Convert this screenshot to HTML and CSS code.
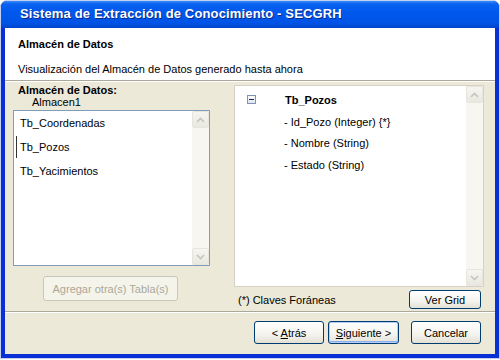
FILE: index.html
```html
<!DOCTYPE html>
<html lang="es">
<head>
    <meta charset="UTF-8">
    <title>SECGRH - Almacén de Datos</title>
    <link rel="stylesheet" href="styles.css">
</head>
<body>
    <div class="window">
        <div class="titlebar">Sistema de Extracción de Conocimiento - SECGRH</div>
        <div class="client">
            <div class="header">
                <div class="header-title">Almacén de Datos</div>
                <div class="header-desc">Visualización del Almacén de Datos generado hasta ahora</div>
            </div>
            <div class="main">
                <div class="left">
                    <div class="store-label">Almacén de Datos:</div>
                    <div class="store-name">Almacen1</div>
                    <div class="listbox">
                        <ul class="items">
                            <li>Tb_Coordenadas</li>
                            <li class="focused">Tb_Pozos</li>
                            <li>Tb_Yacimientos</li>
                        </ul>
                        <div class="scrollbar">
                            <div class="arrow"><svg width="9" height="6" viewBox="0 0 9 6"><path d="M1 5 L4.5 1.5 L8 5" fill="none" stroke="#c6c5bd" stroke-width="1.6"/></svg></div>
                            <div class="track"></div>
                            <div class="arrow"><svg width="9" height="6" viewBox="0 0 9 6"><path d="M1 1 L4.5 4.5 L8 1" fill="none" stroke="#c6c5bd" stroke-width="1.6"/></svg></div>
                        </div>
                    </div>
                    <button class="btn btn-add" disabled>Agregar otra(s) Tabla(s)</button>
                </div>
                <div class="right">
                    <div class="treebox">
                        <div class="tree">
                            <div class="tree-root">
                                <span class="toggle"></span>
                                <span class="root-name">Tb_Pozos</span>
                            </div>
                            <div class="tree-item">- Id_Pozo (Integer) {*}</div>
                            <div class="tree-item">- Nombre (String)</div>
                            <div class="tree-item">- Estado (String)</div>
                        </div>
                        <div class="scrollbar">
                            <div class="arrow"><svg width="9" height="6" viewBox="0 0 9 6"><path d="M1 5 L4.5 1.5 L8 5" fill="none" stroke="#c6c5bd" stroke-width="1.6"/></svg></div>
                            <div class="track"></div>
                            <div class="arrow"><svg width="9" height="6" viewBox="0 0 9 6"><path d="M1 1 L4.5 4.5 L8 1" fill="none" stroke="#c6c5bd" stroke-width="1.6"/></svg></div>
                        </div>
                    </div>
                    <div class="right-foot">
                        <span class="note">(*) Claves Foráneas</span>
                        <button class="btn btn-grid">Ver Grid</button>
                    </div>
                </div>
            </div>
            <div class="footer">
                <button class="btn btn-nav">&lt; <u>A</u>trás</button>
                <button class="btn btn-nav btn-default"><u>S</u>iguiente &gt;</button>
                <button class="btn btn-nav btn-cancel">Cancelar</button>
            </div>
        </div>
    </div>
</body>
</html>
```

FILE: styles.css
```css
body{
    margin: 0;
    background: #ffffff;
    font-family: "Liberation Sans", Arial, sans-serif;
    font-size: 11px;
    color: #000;
}

.window{
    width: 490px;
    height: 353px;
    border: 1px solid #c3d0f1;
    border-radius: 7px 7px 0 0;
    background: #0830d4;
    padding: 0 4px 4px;
    display: flex;
    flex-direction: column;
}

.titlebar{
    height: 27px;
    margin: 0 -4px;
    padding-left: 19px;
    border-radius: 6px 6px 0 0;
    background: linear-gradient(#3a8cf8 0, #0a62f0 3px, #0058ee 40%, #0054e6 80%, #0046cc 100%);
    color: #fff;
    font-weight: bold;
    font-size: 13px;
    letter-spacing: 0.15px;
    line-height: 26px;
    text-shadow: 1px 1px 0 #0a2a8a;
}

.client{
    flex: 1;
    background: #ece9d8;
    display: flex;
    flex-direction: column;
}

.header{
    height: 52px;
    background: #fff;
    padding-left: 13px;
    border-bottom: 1px solid #aca899;
    box-shadow: 0 1px 0 #fff;
}

.header-title{
    font-weight: bold;
    line-height: 14px;
    margin-top: 9px;
}

.header-desc{
    line-height: 13px;
    margin-top: 12px;
}

.main{
    height: 229px;
    margin-top: 1px;
    display: flex;
    border-bottom: 1px solid #aca899;
}

.left{
    width: 197px;
    margin-left: 8px;
    display: flex;
    flex-direction: column;
}

.store-label{
    font-weight: bold;
    line-height: 12px;
    margin-top: 2px;
    padding-left: 5px;
}

.store-name{
    line-height: 12px;
    padding-left: 19px;
}

.listbox{
    height: 154px;
    margin-top: 2px;
    border: 1px solid #7f9db9;
    background: #fff;
    display: flex;
}

.items{
    flex: 1;
    list-style: none;
    margin: 0;
    padding: 0;
}

.items li{
    height: 24px;
    line-height: 24px;
    padding-left: 6px;
}

.items li.focused{
    margin-left: 2px;
    padding-left: 3px;
    border-left: 1px solid #333;
    height: 22px;
    line-height: 22px;
    margin-top: 1px;
    margin-bottom: 1px;
}

.scrollbar{
    width: 17px;
    background: #f7f6f1;
    display: flex;
    flex-direction: column;
}

.arrow{
    height: 15px;
    border: 1px solid #e8e6dc;
    border-radius: 2px;
    background: linear-gradient(#f6f5ef, #e9e8e0);
    display: flex;
    align-items: center;
    justify-content: center;
}

.track{
    flex: 1;
}

.btn{
    font-family: "Liberation Sans", Arial, sans-serif;
    font-size: 11px;
    color: #000;
    border: 1px solid #003c74;
    border-radius: 3px;
    background: linear-gradient(#ffffff, #f4f3ee 60%, #e3e0d4);
    padding: 0;
}

.btn u{
    text-decoration: underline;
}

.btn-add{
    width: 135px;
    height: 25px;
    margin-top: 10px;
    margin-left: 30px;
    color: #aca899;
    border-color: #c9c7ba;
    background: #f5f4ea;
}

.right{
    width: 250px;
    margin-left: 24px;
    display: flex;
    flex-direction: column;
}

.treebox{
    height: 200px;
    margin-top: 3px;
    border: 1px solid #d6d3c6;
    background: #fff;
    display: flex;
}

.tree{
    flex: 1;
    padding-top: 6px;
}

.tree-root{
    height: 15px;
    display: flex;
    align-items: center;
}

.toggle{
    width: 7px;
    height: 7px;
    margin-left: 12px;
    border: 1px solid #7e93b8;
    background: linear-gradient(#fff, #dfe3ec);
    position: relative;
}

.toggle::after{
    content: "";
    position: absolute;
    left: 1px;
    top: 3px;
    width: 5px;
    height: 1px;
    background: #1a2a60;
}

.root-name{
    font-weight: bold;
    margin-left: 29px;
}

.tree-item{
    line-height: 14px;
    margin-top: 7.7px;
    padding-left: 49px;
}

.right-foot{
    display: flex;
    align-items: center;
    justify-content: space-between;
    margin-top: 3px;
    padding-left: 4px;
}

.btn-grid{
    width: 72px;
    height: 19px;
    margin-right: 3px;
}

.footer{
    border-top: 1px solid #fff;
    display: flex;
    padding-top: 8px;
    padding-left: 249px;
}

.btn-nav{
    width: 70px;
    height: 23px;
    margin-right: 4px;
}

.btn-default{
    width: 71px;
    box-shadow: inset 0 0 0 1px #b6cdf5, inset 0 -1px 0 1px #8cb0ee;
}

.btn-cancel{
    margin-left: 8px;
}
```
